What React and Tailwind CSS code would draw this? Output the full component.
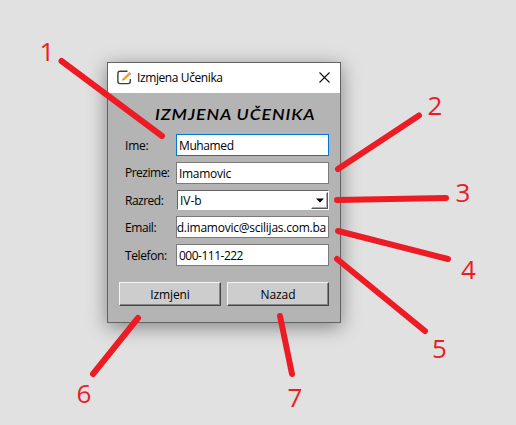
import React from "react";

const arrows = [
  [61.5, 61, 162, 136],
  [338, 169, 419, 115.5],
  [337, 200, 446, 198],
  [338, 231, 448, 259],
  [337, 259, 425, 331],
  [138, 318, 93, 374],
  [280, 316, 292, 374],
];

const numbers = [
  ["1", 39.5, 61],
  ["2", 427.5, 115],
  ["3", 455.5, 202],
  ["4", 461, 279],
  ["5", 432, 358],
  ["6", 76.5, 403],
  ["7", 287.5, 407],
];

function Label({ children, spacing = "" }) {
  return (
    <div className={`w-[51px] shrink-0 whitespace-nowrap ${spacing}`}>{children}</div>
  );
}

function Field({ label, value, active, spacing, valueSpacing = "", end }) {
  return (
    <div className="flex h-[22px] items-center">
      <Label spacing={spacing}>{label}</Label>
      <div
        className={`flex h-[22px] w-[153px] items-center overflow-hidden border bg-white ${
          end ? "pr-[2px] pl-0" : "px-[2px]"
        } ${active ? "border-[#0078d7]" : "border-[#7a7a7a]"}`}
      >
        <div className={`flex w-full whitespace-nowrap ${end ? "justify-end" : ""}`}>
          <span className={`shrink-0 ${valueSpacing}`}>{value}</span>
        </div>
      </div>
    </div>
  );
}

function Button({ children }) {
  return (
    <button className="flex h-6 w-[102px] items-center justify-center border border-t-[#f4f4f4] border-l-[#f4f4f4] border-r-[#454545] border-b-[#454545] bg-[#cdcdcd] pt-px tracking-[-0.1px] shadow-[inset_-1px_-1px_0_#858585]">
      {children}
    </button>
  );
}

export default function App() {
  return (
    <div className="relative h-[425px] w-[516px] overflow-hidden bg-[#e1e1e1] pt-[62px] pl-[107px] font-['Open_Sans','Noto_Sans',sans-serif] text-[12px] leading-4 text-black">
      <div className="h-[261px] w-[234px] border border-[#636363] bg-[#b4b4b4] shadow-[0_4px_18px_rgba(0,0,0,0.42)]">
        <header className="flex h-[30px] items-center bg-white pr-[10px] pl-[9px]">
          <svg className="relative -top-px" width="15" height="15" viewBox="0 0 15 15" fill="none">
            <path d="M10.5 1.2H3Q.9 1.2.9 3.3v8.2Q.9 13.6 3 13.6h8.2q2.1 0 2.1-2.1V9" stroke="#3d4147" strokeWidth="1.4" />
            <path d="M5.2 10.6 6.1 8.2 11.3 3 13.1 4.8 7.9 10Z" fill="#f9a11b" />
            <path d="m11.3 3 1-1 1.9 1.9-1 1Z" fill="#e77b72" />
            <path d="m5.2 10.6.5-1.5 1 1Z" fill="#8b6338" />
          </svg>
          <span className="ml-[5px] whitespace-nowrap tracking-[-0.4px]">Izmjena Učenika</span>
          <svg className="relative -top-px ml-auto" width="11" height="11" viewBox="0 0 11 11">
            <path d="m.5.5 10 10m0-10-10 10" stroke="#111" strokeWidth="1.1" />
          </svg>
        </header>
        <main className="pr-[11px] pl-[11px]">
          <h1 className="ml-[36px] flex h-[41px] w-[146px] origin-left scale-x-[1.22] items-center whitespace-nowrap pt-[3px] font-['Lato',sans-serif] text-[14.5px] font-semibold italic tracking-[0.75px]">
            IZMJENA UČENIKA
          </h1>
          <div className="ml-[6px] flex flex-col gap-[6px]">
            <Field label="Ime:" value="Muhamed" active spacing="pt-[2px] tracking-[-0.2px]" valueSpacing="pt-px tracking-[-0.4px]" />
            <Field label="Prezime:" value="Imamovic" spacing="tracking-[-0.5px]" valueSpacing="pt-px tracking-[-0.3px]" />
            <div className="flex h-[20px] items-center">
              <Label spacing="pt-px tracking-[-0.5px]">Razred:</Label>
              <div className="ml-px flex h-5 w-[152px] items-center border border-t-[#626262] border-l-[#626262] border-r-white border-b-white bg-white">
                <span className="ml-[2px] pt-px">IV-b</span>
                <div className="ml-auto flex h-[17px] w-[17px] items-center justify-center border border-t-white border-l-white border-r-[#555] border-b-[#555] bg-white shadow-[inset_-1px_-1px_0_#aaa]">
                  <svg width="8" height="5" viewBox="0 0 8 5">
                    <path d="M0 .5h8L4 4.5Z" fill="#000" />
                  </svg>
                </div>
              </div>
            </div>
            <Field label="Email:" value="d.imamovic@scilijas.com.ba" end spacing="pt-px tracking-[-0.4px]" valueSpacing="pt-px tracking-[-0.24px]" />
            <Field label="Telefon:" value="000-111-222" spacing="pt-px tracking-[-0.4px]" valueSpacing="pt-px tracking-[-0.5px]" />
          </div>
          <div className="mt-4 flex gap-[6px]">
            <Button>Izmjeni</Button>
            <Button>Nazad</Button>
          </div>
        </main>
      </div>
      <svg className="pointer-events-none absolute inset-0" width="516" height="425" viewBox="0 0 516 425">
        {arrows.map(([x1, y1, x2, y2]) => (
          <line key={`${x1}-${y1}`} x1={x1} y1={y1} x2={x2} y2={y2} stroke="#ed1c24" strokeWidth="6" strokeLinecap="round" />
        ))}
        {numbers.map(([n, x, y]) => (
          <text key={n} x={x} y={y} fill="#ed1c24" fontSize="26">
            {n}
          </text>
        ))}
      </svg>
    </div>
  );
}
